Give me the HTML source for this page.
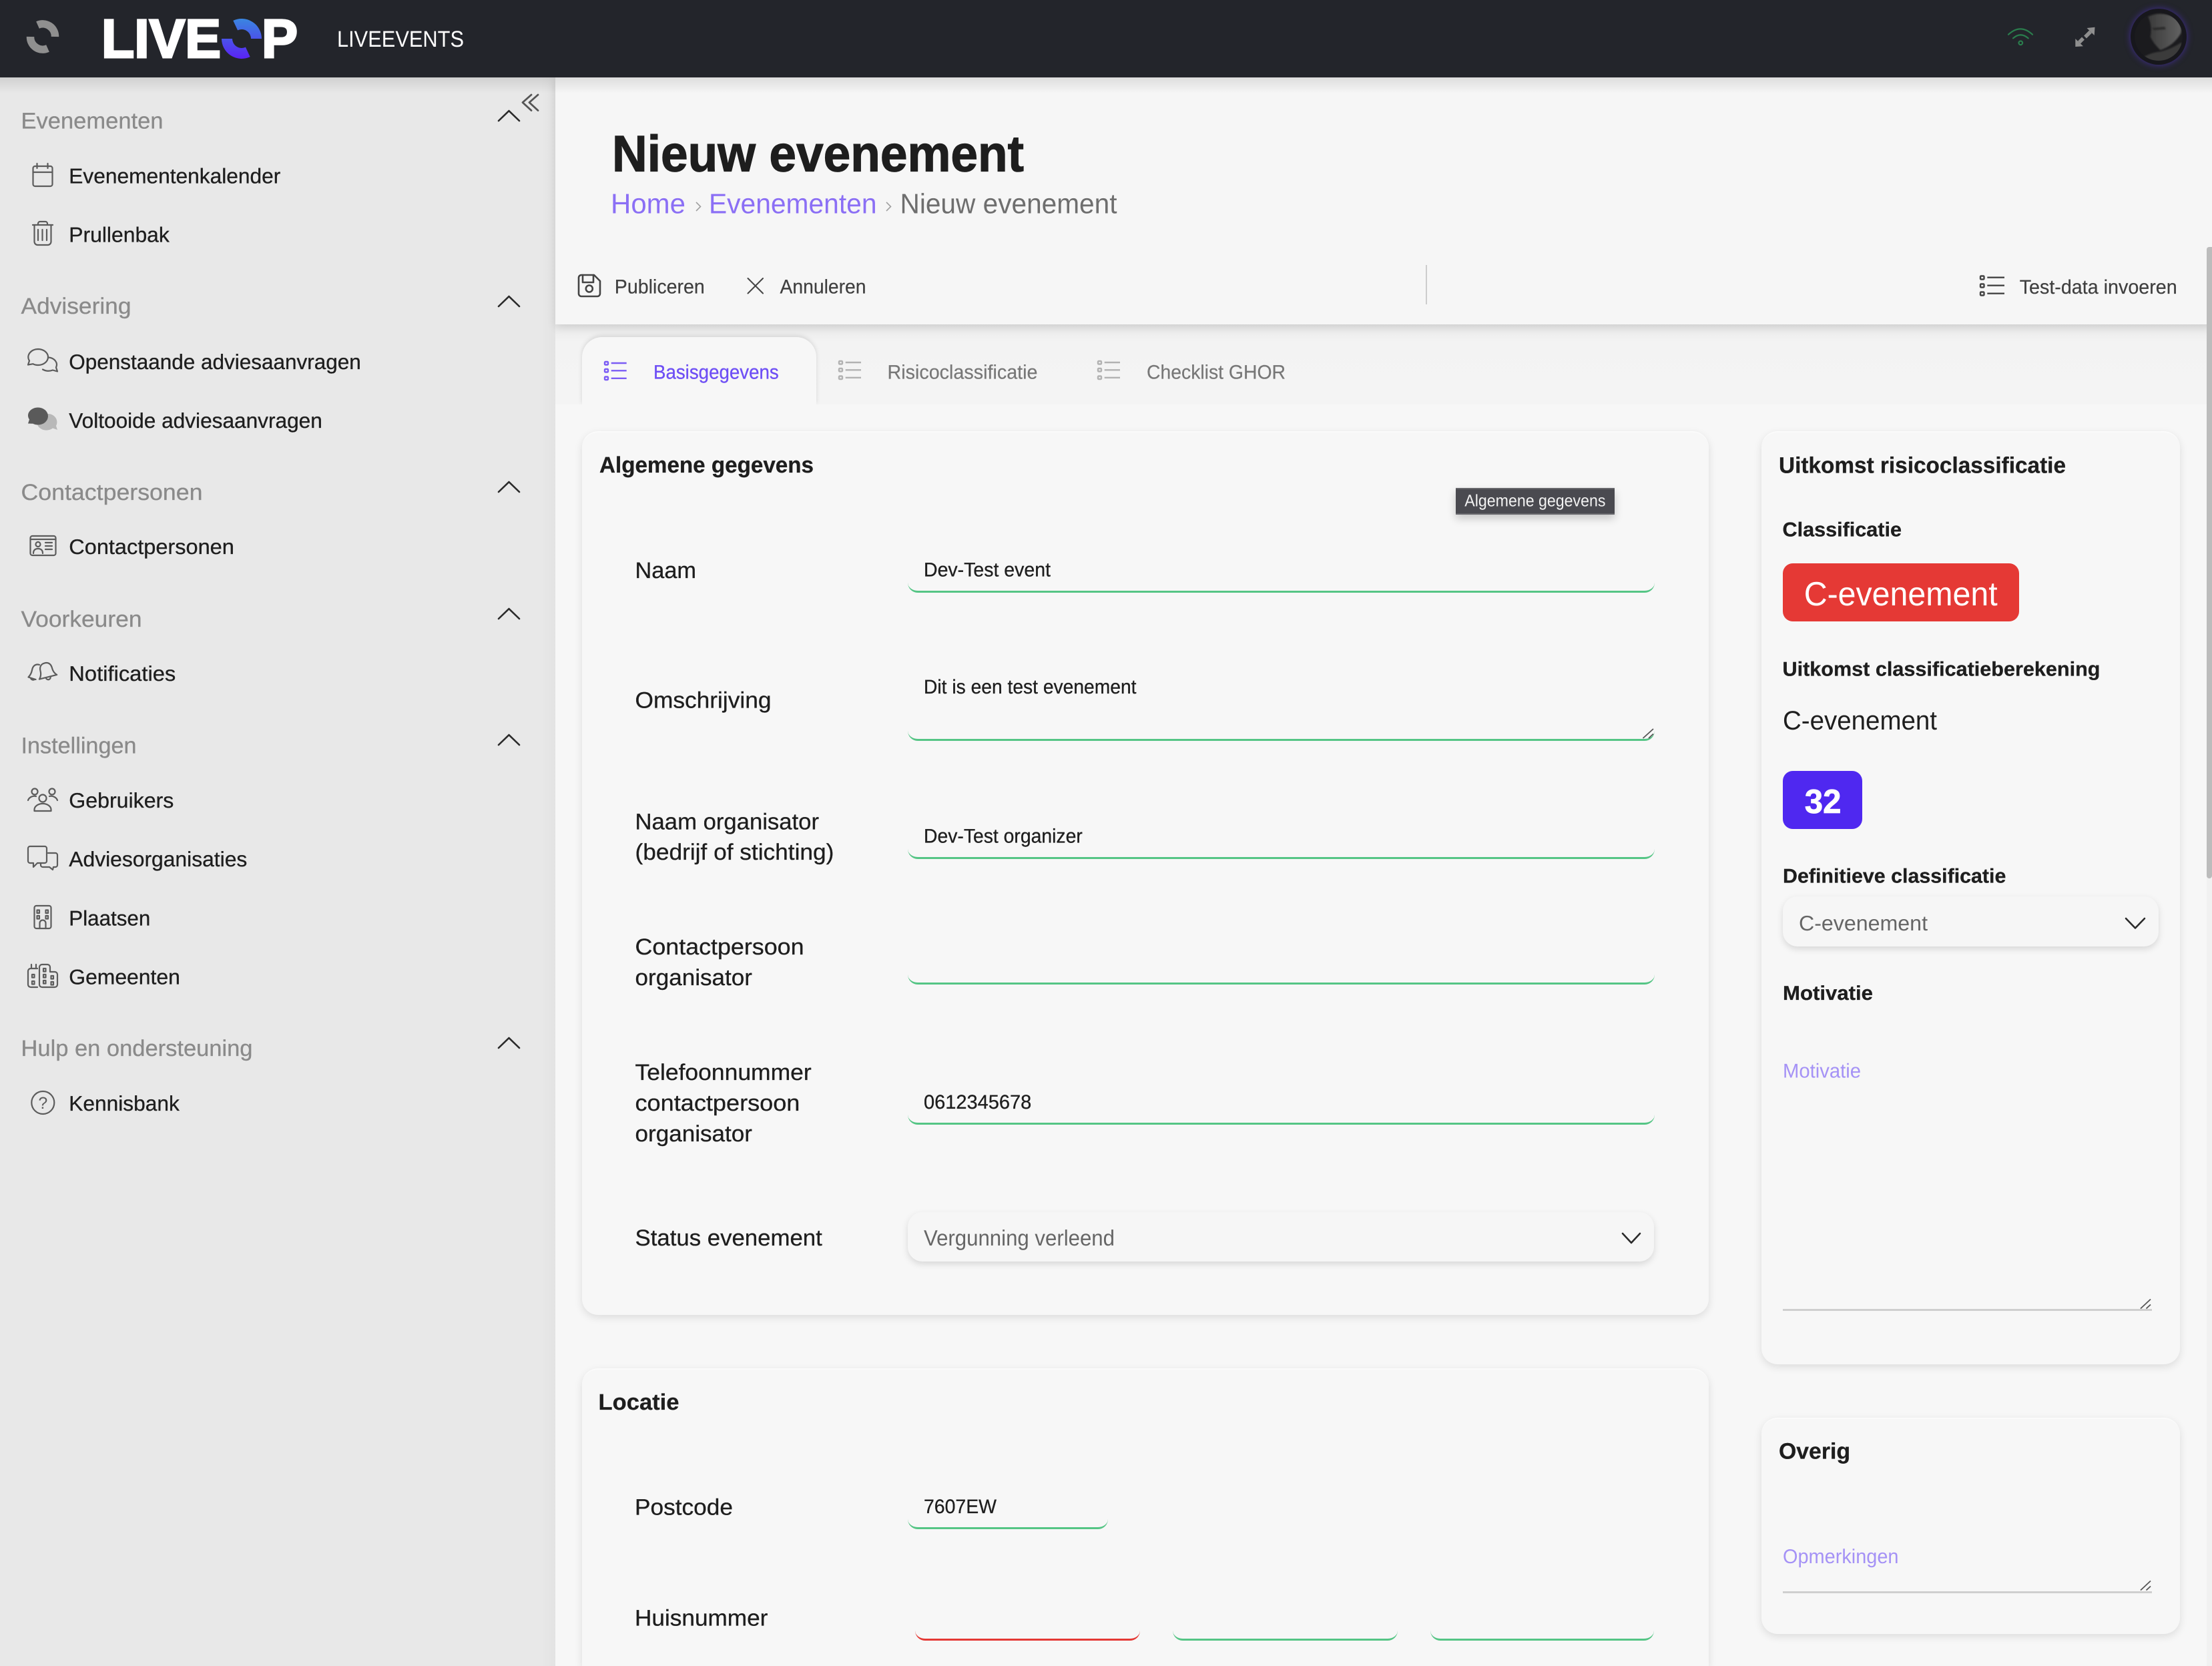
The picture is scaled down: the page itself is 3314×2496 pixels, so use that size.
<!DOCTYPE html>
<html lang="nl">
<head>
<meta charset="utf-8">
<title>Nieuw evenement</title>
<style>
html,body{margin:0;padding:0;width:3314px;height:2496px;overflow:hidden;background:#f7f7f7;font-family:"Liberation Sans",sans-serif}
#app{position:relative;width:3314px;height:2496px;overflow:hidden;background:#f7f7f7}
.a{position:absolute;box-sizing:border-box}
.card{background:#f7f7f7;border-top:2px solid #fbfbfb;border-radius:24px;box-shadow:0 4px 12px rgba(0,0,0,.11)}
.line{border-bottom:3px solid #55c585;border-radius:0 0 15px 15px}
.red{border-bottom-color:#e53935}
.sel{background:#f6f6f6;border-radius:22px;box-shadow:0 4px 10px rgba(0,0,0,.13)}
svg{position:absolute;left:0;top:0}
text{font-family:"Liberation Sans",sans-serif;text-rendering:geometricPrecision}
.h{font-size:34px;fill:#8a8a8a;stroke:#8a8a8a;stroke-width:.3}
.i{font-size:31.5px;fill:#1e1e1e;stroke:#1e1e1e;stroke-width:.3}
.l{font-size:34px;fill:#1e1e1e;stroke:#1e1e1e;stroke-width:.3}
.v{font-size:29.6px;fill:#1e1e1e;stroke:#1e1e1e;stroke-width:.3}
.t{font-size:29.6px;fill:#3f3f3f;stroke:#3f3f3f;stroke-width:.2}
.b{font-size:33.8px;font-weight:700;fill:#1e1e1e;stroke:#1e1e1e;stroke-width:.3}
.s{font-size:30px;font-weight:700;fill:#1e1e1e;stroke:#1e1e1e;stroke-width:.3}
.ph{font-size:30px;fill:#a592f6}
.ic{fill:none;stroke:#5c5c5c;stroke-width:2.2;stroke-linecap:round;stroke-linejoin:round}
.ch{fill:none;stroke:#2a2a2a;stroke-width:2.6;stroke-linecap:round;stroke-linejoin:round}
</style>
</head>
<body>
<div id="app">
<div class="a" style="left:832px;top:116px;width:2482px;height:2380px;background:#f7f7f7"></div>
<div class="a" style="left:0;top:116px;width:832px;height:2380px;background:linear-gradient(to right,#e8e8e8 97.5%,#e3e3e3)"></div>
<div class="a" style="left:832px;top:486px;width:2482px;height:120px;background:linear-gradient(#e9e9e9,#f3f3f3 22%,#f4f4f4)"></div>
<div class="a" style="left:832px;top:116px;width:2482px;height:370px;background:#f6f6f6;box-shadow:0 4px 12px rgba(0,0,0,.12)"></div>
<div class="a" style="left:872px;top:505px;width:351px;height:101px;background:#f7f7f7;border-radius:30px 30px 0 0;box-shadow:0 -2px 7px rgba(0,0,0,.12)"></div>
<div class="a" style="left:860px;top:606px;width:380px;height:12px;background:#f7f7f7"></div>
<div class="a" style="left:0;top:116px;width:3314px;height:24px;background:linear-gradient(rgba(0,0,0,.1),rgba(0,0,0,0))"></div>
<div class="a" style="left:0;top:0;width:3314px;height:116px;background:#23252b"></div>

<div class="a card" style="left:872px;top:646px;width:1688px;height:1324px"></div>
<div class="a card" style="left:872px;top:2050px;width:1688px;height:446px;border-radius:24px 24px 0 0"></div>
<div class="a card" style="left:2639px;top:646px;width:627px;height:1398px"></div>
<div class="a card" style="left:2639px;top:2124px;width:627px;height:324px"></div>

<div class="a" style="left:3306px;top:370px;width:8px;height:2126px;background:#f1f1f1"></div>
<div class="a" style="left:3306px;top:370px;width:8px;height:946px;background:#bcbcbc;border-radius:5px 0 5px 5px"></div>

<div class="a" style="left:2181px;top:731px;width:238px;height:40px;background:#4a4a50;border-top:2px solid #66666b;border-bottom:2px solid #66666b;box-shadow:0 6px 12px rgba(0,0,0,.2)"></div>

<div class="a line" style="left:1360px;top:860px;width:1119px;height:28px"></div>
<div class="a line" style="left:1360px;top:1080px;width:1119px;height:30px"></div>
<div class="a line" style="left:1360px;top:1259px;width:1119px;height:28px"></div>
<div class="a line" style="left:1360px;top:1447px;width:1119px;height:28px"></div>
<div class="a line" style="left:1360px;top:1657px;width:1119px;height:28px"></div>
<div class="a sel" style="left:1360px;top:1816px;width:1118px;height:74px"></div>
<div class="a line" style="left:1360px;top:2263px;width:300px;height:28px"></div>
<div class="a line red" style="left:1371px;top:2430px;width:337px;height:28px"></div>
<div class="a line" style="left:1757px;top:2430px;width:337px;height:28px"></div>
<div class="a line" style="left:2143px;top:2430px;width:335px;height:28px"></div>

<div class="a" style="left:2671px;top:844px;width:354px;height:87px;background:#e53935;border-radius:15px"></div>
<div class="a" style="left:2671px;top:1155px;width:119px;height:87px;background:#4f28f0;border-radius:15px"></div>
<div class="a sel" style="left:2671px;top:1343px;width:563px;height:75px"></div>
<div class="a" style="left:2671px;top:1961px;width:553px;height:3px;background:#cfcfcf"></div>
<div class="a" style="left:2671px;top:2384px;width:553px;height:3px;background:#cfcfcf"></div>

<div class="a" style="left:3192px;top:13px;width:84px;height:84px;border-radius:50%;background:#17171c;box-shadow:0 0 9px 1px rgba(80,50,200,.55)"></div>

<svg width="3314" height="2496" viewBox="0 0 3314 2496" xmlns="http://www.w3.org/2000/svg">
<defs>
<linearGradient id="lg" x1="0" y1="28" x2="0" y2="88" gradientUnits="userSpaceOnUse"><stop offset="0" stop-color="#3a86e0"/><stop offset="1" stop-color="#5a22f4"/></linearGradient>
<linearGradient id="fc" x1="0" y1="0" x2="1" y2="0"><stop offset="0" stop-color="#3a3a3a"/><stop offset="1" stop-color="#626262"/></linearGradient>
<clipPath id="av"><circle cx="3234" cy="55" r="36"/></clipPath>
<filter id="bl" x="-20%" y="-20%" width="140%" height="140%"><feGaussianBlur stdDeviation="3"/></filter>
</defs>

<!-- header -->
<g fill="none" stroke="#8f8f8f" stroke-width="11.5">
<path d="M56.5 37.5A18.5 18.5 0 0 1 82.5 55"/>
<path d="M45.5 55A18.5 18.5 0 0 0 71.5 72.5"/>
</g>
<text x="152" y="86" font-size="81.5" font-weight="700" fill="#fff" stroke="#fff" stroke-width="3" textLength="179" lengthAdjust="spacingAndGlyphs">LIVE</text>
<text x="392" y="86" font-size="81.5" font-weight="700" fill="#fff" stroke="#fff" stroke-width="3" textLength="54" lengthAdjust="spacingAndGlyphs">P</text>
<g fill="none" stroke="url(#lg)" stroke-width="16">
<path d="M352.7 38.1A22 22 0 0 1 384 58"/>
<path d="M340 58A22 22 0 0 0 371.3 77.9"/>
</g>
<text x="505" y="70" font-size="34" fill="#fff" textLength="190" lengthAdjust="spacingAndGlyphs">LIVEEVENTS</text>
<g fill="none" stroke="#2a7d4d" stroke-width="2.2" stroke-linecap="round">
<path d="M3009 51.7Q3027 35 3045 51.7"/>
<path d="M3016 57.3Q3027.3 47.3 3038.7 57.3"/>
<circle cx="3027.3" cy="64.3" r="2.8"/>
</g>
<g fill="#8f8f8f">
<path d="M3126.5 42L3138.5 40.7L3137.7 53Z"/>
<path d="M3109.3 58L3109.3 70L3121 69.3Z"/>
</g>
<g stroke="#8f8f8f" stroke-width="5.5"><path d="M3132 47.5L3124 55.5"/><path d="M3121 57.5L3115 63.5"/></g>
<g clip-path="url(#av)">
<circle cx="3234" cy="55" r="36" fill="#1b1b1e"/>
<g transform="translate(2860 0) scale(.3333)" filter="url(#bl)">
<path d="M1075 75Q1130 48 1195 78Q1232 110 1222 150Q1190 205 1130 225Q1098 195 1085 165Q1095 120 1075 75Z" fill="url(#fc)"/>
<path d="M1040 265Q1085 235 1130 232Q1180 220 1225 190L1240 280L1040 290Z" fill="#3a3a3a"/>
<path d="M1092 125L1150 120L1155 132L1100 136Z" fill="#2a2a2a"/>
</g>
</g>

<!-- sidebar headers -->
<text class="h" x="31.5" y="192.5" textLength="213" lengthAdjust="spacingAndGlyphs">Evenementen</text>
<text class="h" x="31.5" y="470" textLength="165" lengthAdjust="spacingAndGlyphs">Advisering</text>
<text class="h" x="31.5" y="749" textLength="272" lengthAdjust="spacingAndGlyphs">Contactpersonen</text>
<text class="h" x="31.5" y="939" textLength="181" lengthAdjust="spacingAndGlyphs">Voorkeuren</text>
<text class="h" x="31.5" y="1128.5" textLength="173" lengthAdjust="spacingAndGlyphs">Instellingen</text>
<text class="h" x="31.5" y="1582" textLength="347" lengthAdjust="spacingAndGlyphs">Hulp en ondersteuning</text>

<!-- sidebar items -->
<text class="i" x="103.3" y="274.5" textLength="317" lengthAdjust="spacingAndGlyphs">Evenementenkalender</text>
<text class="i" x="103.3" y="362.5" textLength="150.5" lengthAdjust="spacingAndGlyphs">Prullenbak</text>
<text class="i" x="103.3" y="553" textLength="437.5" lengthAdjust="spacingAndGlyphs">Openstaande adviesaanvragen</text>
<text class="i" x="103.3" y="641" textLength="379.5" lengthAdjust="spacingAndGlyphs">Voltooide adviesaanvragen</text>
<text class="i" x="103.3" y="830" textLength="247.5" lengthAdjust="spacingAndGlyphs">Contactpersonen</text>
<text class="i" x="103.3" y="1020" textLength="160" lengthAdjust="spacingAndGlyphs">Notificaties</text>
<text class="i" x="103.3" y="1210" textLength="157" lengthAdjust="spacingAndGlyphs">Gebruikers</text>
<text class="i" x="103.3" y="1298" textLength="267" lengthAdjust="spacingAndGlyphs">Adviesorganisaties</text>
<text class="i" x="103.3" y="1386.7" textLength="122" lengthAdjust="spacingAndGlyphs">Plaatsen</text>
<text class="i" x="103.3" y="1474.7" textLength="166.5" lengthAdjust="spacingAndGlyphs">Gemeenten</text>
<text class="i" x="103.3" y="1664" textLength="165.5" lengthAdjust="spacingAndGlyphs">Kennisbank</text>

<!-- chevrons -->
<g class="ch">
<path d="M747 181L762.5 166L778 181"/>
<path d="M747 459L762.5 444L778 459"/>
<path d="M747 737L762.5 722L778 737"/>
<path d="M747 927L762.5 912L778 927"/>
<path d="M747 1116L762.5 1101L778 1116"/>
<path d="M747 1570L762.5 1555L778 1570"/>
</g>
<g fill="none" stroke="#555" stroke-width="2.8" stroke-linecap="round" stroke-linejoin="round">
<path d="M796 142L783 153.5L796 165.5"/>
<path d="M806 142L793 153.5L806 165.5"/>
</g>

<!-- sidebar icons -->
<g class="ic">
<rect x="49.5" y="249" width="29" height="30" rx="3"/><path d="M49.5 258H78.5M55.5 245V252M71.5 245V252"/>
<path d="M49 337H79M57 337V335a3 3 0 0 1 3-3h8a3 3 0 0 1 3 3v2"/><path d="M51.5 337V362a5 5 0 0 0 5 5h15a5 5 0 0 0 5-5V337"/><path d="M57 344V360M63.5 344V360M70 344V360"/>
<path d="M57 523a15 12 0 0 1 0 24c-3 0-5.500-.6-7.500-1.800L42 546.500l2-6a15 12 0 0 1 13-17.500z"/>
<path d="M73 535.500a13.500 11 0 0 1 11 15l2 6-7-2a14 11 0 0 1-15-1"/>
<rect x="45.5" y="803" width="38" height="29" rx="3"/><path d="M45.5 808H83.5"/><circle cx="57" cy="815.5" r="3.5"/><path d="M50 829c0-5 3-7 7-7s7 2 7 7M68 813H78M68 818H78M68 823H78"/>
<g transform="translate(70 1006) rotate(-14)"><path d="M0-13c-6 0-9 4-9 10 0 6-2 9-4.500 11.500h27c-2.500-2.500-4.500-5.500-4.500-11.500 0-6-3-10-9-10z"/><path d="M-3.500 9a3.500 3.500 0 0 0 7 0"/></g>
<path d="M59 996c-6-2-10 2-11 8-1 5-3 8-5.500 10.500l11 3.500M46 1016a4 4 0 0 0 6 2"/>
<circle cx="64" cy="1196" r="5.5"/><circle cx="52" cy="1186" r="4.5"/><circle cx="78" cy="1186" r="4.5"/>
<path d="M42 1199a10 9 0 0 1 12-6M86 1199a10 9 0 0 0-12-6"/>
<path d="M51.500 1215v-2a12.500 9 0 0 1 25 0v2z"/>
<path d="M45 1268h22a3 3 0 0 1 3 3v19a3 3 0 0 1-3 3H56l-6 6v-6h-5a3 3 0 0 1-3-3v-19a3 3 0 0 1 3-3z"/>
<path d="M72 1278h11a3 3 0 0 1 3 3v15a3 3 0 0 1-3 3h-3l-1 4-5-4H64a3 3 0 0 1-3-3v-3"/>
<rect x="51.5" y="1357" width="25" height="34" rx="3"/>
<rect x="55.5" y="1363.5" width="3.5" height="4.5"/><rect x="68.5" y="1363.5" width="3.5" height="4.5"/>
<rect x="55.5" y="1372" width="3.5" height="4.5"/><rect x="68.5" y="1372" width="3.5" height="4.5"/>
<path d="M59.500 1391v-8a4.500 4.500 0 0 1 9 0v8"/>
<path d="M47 1451V1445M54 1451V1445M56 1479H46a4 4 0 0 1-4-4V1455a4 4 0 0 1 4-4h10"/>
<path d="M59 1475V1449a4 4 0 0 1 4-4h8a4 4 0 0 1 4 4V1456h7a4 4 0 0 1 4 4v15a4 4 0 0 1-4 4H63a4 4 0 0 1-4-4z"/>
<rect x="48" y="1460" width="3.5" height="4.5"/><rect x="48" y="1470" width="3.5" height="4.5"/>
<rect x="65" y="1451" width="3.5" height="4.5"/><rect x="65" y="1460" width="3.5" height="4.5"/><rect x="65" y="1469" width="3.5" height="4.5"/>
<rect x="76.5" y="1462" width="3.5" height="4.5"/><rect x="76.5" y="1471" width="3.5" height="4.5"/>
<circle cx="64.3" cy="1652" r="17"/>
</g>
<text x="64.3" y="1661" font-size="25" fill="#5c5c5c" text-anchor="middle">?</text>
<path d="M72 620a13.500 12.500 0 0 1 12 18l2 6-7-2.500a14 12 0 0 1-19-18z" fill="#b8b8b8"/>
<path d="M57 610.500a15 13 0 0 1 0 26c-3 0-5.500-.6-7.500-1.800L42 634.500l2-6a15 12 0 0 1 13-18z" fill="#5a5a5a"/>

<!-- page head -->
<text x="917" y="256.5" font-size="76.5" font-weight="700" fill="#1e1e1e" stroke="#1e1e1e" stroke-width="1.2" textLength="617" lengthAdjust="spacingAndGlyphs">Nieuw evenement</text>
<text x="915" y="319.5" font-size="42" fill="#8b6ff5" textLength="112" lengthAdjust="spacingAndGlyphs">Home</text>
<path d="M1043 303L1049.500 309.500L1043 316" fill="none" stroke="#a0a0a0" stroke-width="1.6"/>
<text x="1062" y="319.5" font-size="42" fill="#8b6ff5" textLength="251.500" lengthAdjust="spacingAndGlyphs">Evenementen</text>
<path d="M1328 303L1334.500 309.500L1328 316" fill="none" stroke="#a0a0a0" stroke-width="1.6"/>
<text x="1348.5" y="319.5" font-size="42" fill="#6e6e6e" textLength="325" lengthAdjust="spacingAndGlyphs">Nieuw evenement</text>

<!-- toolbar -->
<g fill="none" stroke="#444" stroke-width="2.6" stroke-linejoin="round" stroke-linecap="round">
<path d="M871 412h19l9 9v19a4 4 0 0 1-4 4h-24a4 4 0 0 1-4-4v-24a4 4 0 0 1 4-4z"/>
<path d="M873 412v11h16v-11"/>
<circle cx="882.8" cy="432.5" r="5"/>
<path d="M1120.500 417L1143 439.500M1143 417L1120.500 439.500" stroke-width="2"/>
</g>
<text class="t" x="920.8" y="439.5" textLength="135" lengthAdjust="spacingAndGlyphs">Publiceren</text>
<text class="t" x="1168.5" y="439.5" textLength="129" lengthAdjust="spacingAndGlyphs">Annuleren</text>
<path d="M2137 397V456" stroke="#cdcdcd" stroke-width="2"/>
<g fill="none" stroke="#444" stroke-width="2.4">
<rect x="2967" y="413.5" width="5.5" height="5" rx="1"/><rect x="2967" y="425.5" width="5.5" height="5" rx="1"/><rect x="2967" y="437.5" width="5.5" height="5" rx="1"/>
<path d="M2977.300 415.700H3003M2977.300 427.700H3003M2977.300 439.700H3003"/>
</g>
<text class="t" x="3025.7" y="440" textLength="236" lengthAdjust="spacingAndGlyphs">Test-data invoeren</text>

<!-- tabs -->
<g fill="none" stroke="#7b5cf5" stroke-width="2.4">
<rect x="906" y="542" width="5" height="4.5" rx="1"/><rect x="906" y="553" width="5" height="4.5" rx="1"/><rect x="906" y="564.5" width="5" height="4.5" rx="1"/>
<path d="M915.700 544H938.700M915.700 555.300H938.700M915.700 566.800H938.700"/>
</g>
<text x="979" y="567.5" font-size="29.6" fill="#6e4ff5" stroke="#6e4ff5" stroke-width=".3" textLength="187.7" lengthAdjust="spacingAndGlyphs">Basisgegevens</text>
<g fill="none" stroke="#b2b2b2" stroke-width="2.4">
<rect x="1257" y="541" width="5" height="4.5" rx="1"/><rect x="1257" y="552" width="5" height="4.5" rx="1"/><rect x="1257" y="563.5" width="5" height="4.5" rx="1"/>
<path d="M1266.700 543H1290M1266.700 554.300H1290M1266.700 565.800H1290"/>
<rect x="1645" y="541" width="5" height="4.5" rx="1"/><rect x="1645" y="552" width="5" height="4.5" rx="1"/><rect x="1645" y="563.5" width="5" height="4.5" rx="1"/>
<path d="M1654.700 543H1678M1654.700 554.300H1678M1654.700 565.800H1678"/>
</g>
<text x="1329.5" y="567.5" font-size="29.6" fill="#777" stroke="#777" stroke-width=".2" textLength="225" lengthAdjust="spacingAndGlyphs">Risicoclassificatie</text>
<text x="1718" y="567.5" font-size="29.6" fill="#777" stroke="#777" stroke-width=".2" textLength="208" lengthAdjust="spacingAndGlyphs">Checklist GHOR</text>

<!-- algemene gegevens -->
<text class="b" x="898" y="708" textLength="321" lengthAdjust="spacingAndGlyphs">Algemene gegevens</text>
<text x="2194.3" y="758.3" font-size="25" fill="#f2f2f2" textLength="211.2" lengthAdjust="spacingAndGlyphs">Algemene gegevens</text>
<text class="l" x="951.5" y="866" textLength="91.5" lengthAdjust="spacingAndGlyphs">Naam</text>
<text class="v" x="1384" y="863.3" textLength="190" lengthAdjust="spacingAndGlyphs">Dev-Test event</text>
<text class="l" x="951.5" y="1060.5" textLength="204" lengthAdjust="spacingAndGlyphs">Omschrijving</text>
<text class="v" x="1384" y="1039" textLength="318.5" lengthAdjust="spacingAndGlyphs">Dit is een test evenement</text>
<text class="l" x="951.5" y="1242.3" textLength="275.5" lengthAdjust="spacingAndGlyphs">Naam organisator</text>
<text class="l" x="951.5" y="1288" textLength="297.9" lengthAdjust="spacingAndGlyphs">(bedrijf of stichting)</text>
<text class="v" x="1384" y="1262.3" textLength="237.8" lengthAdjust="spacingAndGlyphs">Dev-Test organizer</text>
<text class="l" x="951.5" y="1430" textLength="253" lengthAdjust="spacingAndGlyphs">Contactpersoon</text>
<text class="l" x="951.5" y="1475.8" textLength="175.5" lengthAdjust="spacingAndGlyphs">organisator</text>
<text class="l" x="951.5" y="1618" textLength="264.2" lengthAdjust="spacingAndGlyphs">Telefoonnummer</text>
<text class="l" x="951.5" y="1664" textLength="246.9" lengthAdjust="spacingAndGlyphs">contactpersoon</text>
<text class="l" x="951.5" y="1710" textLength="175.5" lengthAdjust="spacingAndGlyphs">organisator</text>
<text class="v" x="1384" y="1661" textLength="161.3" lengthAdjust="spacingAndGlyphs">0612345678</text>
<text class="l" x="951.5" y="1866" textLength="280.3" lengthAdjust="spacingAndGlyphs">Status evenement</text>
<text x="1384" y="1866" font-size="33" fill="#666" textLength="286" lengthAdjust="spacingAndGlyphs">Vergunning verleend</text>
<path class="ch" d="M2431 1848L2444 1862L2457 1848"/>
<g fill="none" stroke="#555" stroke-width="1.8"><path d="M2461.500 1106L2477 1092M2470 1106L2477 1099.500"/></g>

<!-- locatie -->
<text class="b" x="896.5" y="2112" textLength="121" lengthAdjust="spacingAndGlyphs">Locatie</text>
<text class="l" x="951" y="2269.5" textLength="147" lengthAdjust="spacingAndGlyphs">Postcode</text>
<text class="v" x="1384" y="2267" textLength="109" lengthAdjust="spacingAndGlyphs">7607EW</text>
<text class="l" x="951" y="2435.5" textLength="199.4" lengthAdjust="spacingAndGlyphs">Huisnummer</text>

<!-- right column -->
<text class="b" x="2665" y="708.5" textLength="430" lengthAdjust="spacingAndGlyphs">Uitkomst risicoclassificatie</text>
<text class="s" x="2670.5" y="803.5" textLength="178.5" lengthAdjust="spacingAndGlyphs">Classificatie</text>
<text x="2702.7" y="907" font-size="50.5" fill="#fff" textLength="290" lengthAdjust="spacingAndGlyphs">C-evenement</text>
<text class="s" x="2670.5" y="1012.5" textLength="476" lengthAdjust="spacingAndGlyphs">Uitkomst classificatieberekening</text>
<text x="2671" y="1093" font-size="40" fill="#1e1e1e" textLength="231" lengthAdjust="spacingAndGlyphs">C-evenement</text>
<text x="2703.8" y="1217.8" font-size="50.5" font-weight="700" fill="#fff" stroke="#fff" stroke-width=".8" textLength="54.7" lengthAdjust="spacingAndGlyphs">32</text>
<text class="s" x="2671" y="1322.5" textLength="334.4" lengthAdjust="spacingAndGlyphs">Definitieve classificatie</text>
<text x="2695" y="1394" font-size="31.7" fill="#666" textLength="193" lengthAdjust="spacingAndGlyphs">C-evenement</text>
<path class="ch" d="M3185 1376L3199 1390.500L3213 1376"/>
<text class="s" x="2671" y="1498" textLength="135" lengthAdjust="spacingAndGlyphs">Motivatie</text>
<text class="ph" x="2671" y="1614.3" textLength="117" lengthAdjust="spacingAndGlyphs">Motivatie</text>
<g fill="none" stroke="#555" stroke-width="1.8"><path d="M3207 1960.500L3222 1946.500M3215.500 1960.500L3222 1954.500"/><path d="M3207 2382.500L3222 2368.500M3215.500 2382.500L3222 2376.500"/></g>
<text class="b" x="2665" y="2185.5" textLength="107" lengthAdjust="spacingAndGlyphs">Overig</text>
<text class="ph" x="2671" y="2342" textLength="173.5" lengthAdjust="spacingAndGlyphs">Opmerkingen</text>
</svg>
</div>
</body>
</html>
